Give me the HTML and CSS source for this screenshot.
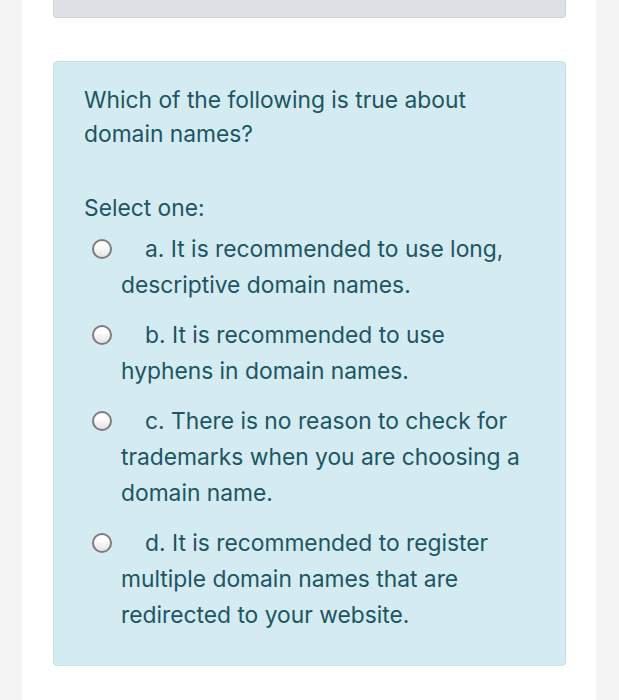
FILE: index.html
```html
<!DOCTYPE html>
<html>
<head>
    <title>Quiz question</title>
    <meta charset="UTF-8">
    <link rel="stylesheet" href="styles.css">
</head>
<body>
    <div class="page">
        <div class="prev-box"></div>

        <div class="question">
            <div class="qtext">Which of the following is true about domain names?</div>

            <div class="prompt">Select one:</div>
            <div class="answers">
                <div class="option">
                    <span class="radio"></span><span class="label">a. It is recommended to use long, descriptive domain names.</span>
                </div>
                <div class="option">
                    <span class="radio"></span><span class="label">b. It is recommended to use hyphens in domain names.</span>
                </div>
                <div class="option">
                    <span class="radio"></span><span class="label">c. There is no reason to check for trademarks when you are choosing a domain name.</span>
                </div>
                <div class="option">
                    <span class="radio"></span><span class="label">d. It is recommended to register multiple domain names that are redirected to your website.</span>
                </div>
            </div>
        </div>
    </div>
</body>
</html>
```

FILE: styles.css
```css
* { box-sizing: border-box; }
body {
    margin: 0;
    background: #f4f4f4;
    font-family: Inter, "Noto Sans", sans-serif;
}
.page {
    background: #fff;
    margin: 0 23px 0 22px;
    min-height: 700px;
    padding: 0 30px 0 31px;
}
.prev-box {
    height: 18px;
    background: #dee2e6;
    border: 1px solid #cdd1d5;
    border-top: none;
    border-radius: 0 0 4px 4px;
}
.question {
    margin-top: 43px;
    background: #d3ebf1;
    border: 1px solid #c3e3ea;
    border-radius: 4px;
    padding: 21px 30px 18px 30px;
    color: #1d5563;
    font-size: 22.8px;
}
.qtext {
    line-height: 34px;
    padding-right: 60px;
}
.prompt {
    margin-top: 40px;
    line-height: 34px;
}
.answers {
    margin-top: 6px;
}
.option {
    padding-left: 37px;
    text-indent: -29px;
    line-height: 36px;
    margin-bottom: 14px;
}
.radio {
    display: inline-block;
    width: 20px;
    height: 20px;
    border: 2px solid #7c7c7c;
    border-radius: 50%;
    background: linear-gradient(#ffffff 30%, #e2e2e2);
    vertical-align: -2px;
    margin-right: 33px;
    text-indent: 0;
}
```
